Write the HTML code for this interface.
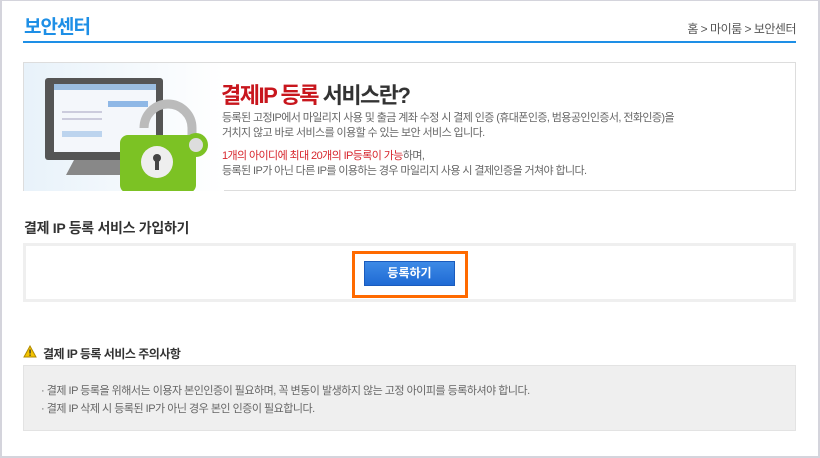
<!DOCTYPE html>
<html><head><meta charset="utf-8"><style>
*{margin:0;padding:0;box-sizing:border-box}
body{width:820px;height:458px;background:#fff;font-family:"Liberation Sans","Noto Sans CJK KR",sans-serif;position:relative;overflow:hidden}
.frame{position:absolute;left:0;top:0;width:820px;height:458px;border:2px solid #d4d4dc;border-top-width:1px}
.abs{position:absolute}
</style></head><body>
<div class="frame"></div>
<div class="abs" style="left:24px;top:12px;font-size:19px;font-weight:bold;color:#1e8fe6;letter-spacing:-1px">보안센터</div>
<div class="abs" style="right:24px;top:20px;font-size:12px;color:#555;letter-spacing:-0.5px">홈 &gt; 마이룸 &gt; 보안센터</div>
<div class="abs" style="left:23px;top:41px;width:773px;height:2px;background:#1e8fe6"></div>

<div class="abs" style="left:23px;top:62px;width:773px;height:129px;border:1px solid #ddd;background:#fff">
<svg class="abs" style="left:0;top:0" width="200" height="128" viewBox="0 0 200 128">
<defs><linearGradient id="bg" x1="0" x2="1"><stop offset="0" stop-color="#e8f2fa"/><stop offset="1" stop-color="#fff"/></linearGradient></defs>
<rect width="200" height="128" fill="url(#bg)"/>
<rect x="21" y="15" width="118" height="82" rx="3" fill="#555"/>
<rect x="30" y="21" width="102" height="68" fill="#f4f7fb"/>
<rect x="30" y="21" width="102" height="6" fill="#9bbde0"/>
<rect x="84" y="38" width="40" height="6" fill="#8fb8e6"/>
<rect x="38" y="48" width="40" height="2" fill="#ccd"/><rect x="38" y="55" width="40" height="2" fill="#ccd"/>
<rect x="38" y="68" width="40" height="6" fill="#bcd4ee"/>
<path d="M50 97 L100 97 L108 112 L42 112Z" fill="#888"/>
<path d="M120 65 a24 24 0 0 1 48 0 v18" fill="none" stroke="#bbb" stroke-width="9"/>
<rect x="96" y="72" width="76" height="58" rx="8" fill="#7cc224"/>
<circle cx="133" cy="99" r="16" fill="#eee"/>
<circle cx="133" cy="95" r="4" fill="#444"/><rect x="131" y="95" width="4" height="12" fill="#444"/>
<circle cx="172" cy="82" r="12" fill="#7cc224"/><circle cx="172" cy="82" r="7" fill="#ddd"/>
</svg>
<div class="abs" style="left:197px;top:15px;font-size:22px;font-weight:bold;letter-spacing:-1.5px;color:#333"><span style="color:#c8161d">결제IP 등록</span> 서비스란?</div>
<div class="abs" style="left:198px;top:48px;font-size:11px;line-height:15px;color:#666;letter-spacing:-0.6px">등록된 고정IP에서 마일리지 사용 및 출금 계좌 수정 시 결제 인증 (휴대폰인증, 범용공인인증서, 전화인증)을<br>거치지 않고 바로 서비스를 이용할 수 있는 보안 서비스 입니다.</div>
<div class="abs" style="left:198px;top:86px;font-size:11px;line-height:15px;color:#666;letter-spacing:-0.6px"><span style="color:#d7262d">1개의 아이디에 최대 20개의 IP등록이 가능</span>하며,<br>등록된 IP가 아닌 다른 IP를 이용하는 경우 마일리지 사용 시 결제인증을 거쳐야 합니다.</div>
</div>

<div class="abs" style="left:24px;top:218px;font-size:14px;font-weight:bold;color:#333;letter-spacing:-0.3px">결제 IP 등록 서비스 가입하기</div>
<div class="abs" style="left:23px;top:243px;width:773px;height:59px;border:3px solid #efefef;background:#fff"></div>
<div class="abs" style="left:352px;top:251px;width:116px;height:47px;border:3px solid #ff6a00"></div>
<div class="abs" style="left:364px;top:261px;width:91px;height:25px;background:linear-gradient(#3d8ae6,#1f6ad4);border:1px solid #1a5bbd;color:#fff;font-size:12px;font-weight:bold;text-align:center;line-height:23px">등록하기</div>

<svg class="abs" style="left:23px;top:345px" width="14" height="13" viewBox="0 0 14 13"><path d="M7 1 L13 12 L1 12Z" fill="#f5c400" stroke="#b08a00"/><rect x="6.4" y="4.5" width="1.3" height="4" fill="#333"/><rect x="6.4" y="9.5" width="1.3" height="1.3" fill="#333"/></svg>
<div class="abs" style="left:43px;top:345px;font-size:12px;font-weight:bold;color:#333;letter-spacing:-0.5px">결제 IP 등록 서비스 주의사항</div>
<div class="abs" style="left:23px;top:365px;width:773px;height:66px;background:#efefef;border:1px solid #e3e3e3"></div>
<div class="abs" style="left:41px;top:382px;font-size:11px;line-height:18px;color:#666;letter-spacing:-0.5px">· 결제 IP 등록을 위해서는 이용자 본인인증이 필요하며, 꼭 변동이 발생하지 않는 고정 아이피를 등록하셔야 합니다.<br>· 결제 IP 삭제 시 등록된 IP가 아닌 경우 본인 인증이 필요합니다.</div>
</body></html>
